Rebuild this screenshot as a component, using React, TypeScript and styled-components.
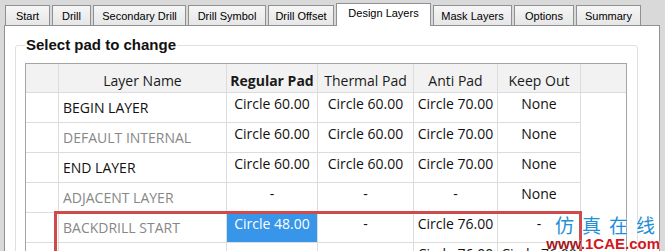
import React from 'react'
import styled, { createGlobalStyle } from 'styled-components'

type Row = {
  name: string;
  muted: boolean;
  pads: string[];
  selected?: number;
}

const tabs = [
  { label: 'Start', width: 45 },
  { label: 'Drill', width: 39 },
  { label: 'Secondary Drill', width: 93 },
  { label: 'Drill Symbol', width: 78 },
  { label: 'Drill Offset', width: 66 },
  { label: 'Design Layers', width: 95 },
  { label: 'Mask Layers', width: 79 },
  { label: 'Options', width: 60 },
  { label: 'Summary', width: 65 },
]

const columns = ['Regular Pad', 'Thermal Pad', 'Anti Pad', 'Keep Out']

const rows: Row[] = [
  { name: 'BEGIN LAYER', muted: false, pads: ['Circle 60.00', 'Circle 60.00', 'Circle 70.00', 'None'] },
  { name: 'DEFAULT INTERNAL', muted: true, pads: ['Circle 60.00', 'Circle 60.00', 'Circle 70.00', 'None'] },
  { name: 'END LAYER', muted: false, pads: ['Circle 60.00', 'Circle 60.00', 'Circle 70.00', 'None'] },
  { name: 'ADJACENT LAYER', muted: true, pads: ['-', '-', '-', 'None'] },
  { name: 'BACKDRILL START', muted: true, pads: ['Circle 48.00', '-', 'Circle 76.00', '-'], selected: 0 },
  { name: 'BACKDRILL MUST NOT CUT', muted: true, pads: ['-', '-', 'Circle 76.00', 'Circle 76.00'] },
]

const App = () => {
  return (
    <Window>
      <GlobalStyle />
      <TabBar>
        {tabs.map((t) => (
          <Tab key={t.label} $width={t.width} $active={t.label === 'Design Layers'}>
            {t.label}
          </Tab>
        ))}
      </TabBar>
      <Panel>
        <GroupBox>
          <GroupTitle>Select pad to change</GroupTitle>
          <GridWrap>
            <Grid>
              <HeadCell />
              <HeadCell>Layer Name</HeadCell>
              {columns.map((c) => (
                <HeadCell key={c} $bold={c === 'Regular Pad'}>{c}</HeadCell>
              ))}
              <HeadCell $last />
              {rows.map((r) => (
                <React.Fragment key={r.name}>
                  <RowHead />
                  <NameCell $muted={r.muted}>{r.name}</NameCell>
                  {r.pads.map((p, i) => (
                    <PadCell key={i} $selected={r.selected === i}>{p}</PadCell>
                  ))}
                  <FillCell />
                </React.Fragment>
              ))}
            </Grid>
            <Highlight />
          </GridWrap>
        </GroupBox>
      </Panel>
      <Stamp>
        <StampCn>仿真在线</StampCn>
        <StampUrl><span>www.</span>1CAE.com</StampUrl>
      </Stamp>
    </Window>
  )
}

const GlobalStyle = createGlobalStyle`
  html, body {
    margin: 0;
    padding: 0;
  }
  body {
    background: #d9d9d9;
    font-family: "Open Sans", "Noto Sans", sans-serif;
  }
`

const Window = styled.div`
  position: relative;
  width: 665px;
  height: 251px;
  box-sizing: border-box;
  padding: 3px 5px 0 4px;
  background: #d9d9d9;
  display: flex;
  flex-direction: column;
  overflow: hidden;
`

const TabBar = styled.div`
  position: relative;
  z-index: 2;
  display: flex;
  align-items: flex-end;
  gap: 2px;
  height: 23px;
  padding-left: 1px;
  margin-bottom: -1px;
`

const Tab = styled.div<{ $active?: boolean; $width: number }>`
  box-sizing: border-box;
  width: ${(p) => p.$width}px;
  height: ${(p) => (p.$active ? '23px' : '20px')};
  margin-bottom: ${(p) => (p.$active ? '0' : '1px')};
  padding-top: ${(p) => (p.$active ? '3px' : '4px')};
  border: 1px solid #8f9091;
  border-bottom: none;
  background: ${(p) => (p.$active ? '#ffffff' : 'linear-gradient(#f6f6f6, #e6e6e6)')};
  font-family: "Liberation Sans", Arial, sans-serif;
  font-size: 11px;
  line-height: 13px;
  text-align: center;
  color: #000;
  white-space: nowrap;
`

const Panel = styled.div`
  position: relative;
  z-index: 1;
  flex: 1;
  background: #ffffff;
  border: 1px solid #8f9091;
  border-bottom: none;
  padding: 10px 21px 0 10px;
`

const GroupBox = styled.fieldset`
  margin: 0;
  padding: 9px 10px 0 9px;
  border: 1px solid #dde1e4;
  border-radius: 3px;
  height: 300px;
`

const GroupTitle = styled.legend`
  padding: 0 1px;
  font-family: "Liberation Sans", Arial, sans-serif;
  font-weight: 700;
  font-size: 15px;
  line-height: 18px;
  color: #111;
`

const GridWrap = styled.div`
  position: relative;
`

const Grid = styled.div`
  display: grid;
  grid-template-columns: 33px 168px 91px 96px 84px 83px 1fr;
  grid-template-rows: 29px;
  grid-auto-rows: 30px;
  width: 602px;
  box-sizing: border-box;
  border: 1px solid #a5a5a5;
  font-size: 14px;
  line-height: 19px;
`

const Cell = styled.div`
  box-sizing: border-box;
  border-right: 1px solid #dcdcdc;
  border-bottom: 1px solid #dcdcdc;
  white-space: nowrap;
  overflow: hidden;
`

const HeadCell = styled(Cell)<{ $bold?: boolean; $last?: boolean }>`
  background: #f2f2f2;
  padding-top: 7px;
  text-align: center;
  color: #1a1a1a;
  font-weight: ${(p) => (p.$bold ? 700 : 400)};
  border-right: ${(p) => (p.$last ? 'none' : '1px solid #dcdcdc')};
`

const RowHead = styled(Cell)`
  background: #ffffff;
`

const NameCell = styled(Cell)<{ $muted: boolean }>`
  display: flex;
  align-items: center;
  padding-left: 4px;
  color: ${(p) => (p.$muted ? '#878787' : '#111111')};
`

const PadCell = styled(Cell)<{ $selected: boolean }>`
  padding-top: 1px;
  text-align: center;
  color: ${(p) => (p.$selected ? '#ffffff' : '#111111')};
  background: ${(p) => (p.$selected ? '#3795ea' : 'transparent')};
`

const FillCell = styled(Cell)`
  border-right: none;
  border-bottom: none;
`

const Highlight = styled.div`
  position: absolute;
  left: 29px;
  top: 148px;
  width: 528px;
  height: 120px;
  box-sizing: border-box;
  border: 3px solid #cf4a4a;
  pointer-events: none;
`

const Stamp = styled.div`
  position: absolute;
  right: 5px;
  bottom: 0;
  z-index: 3;
  display: flex;
  flex-direction: column;
  align-items: flex-end;
`

const StampCn = styled.div`
  font-family: "Noto Sans CJK SC", sans-serif;
  font-size: 19px;
  line-height: 22px;
  letter-spacing: 8px;
  margin-right: -3px;
  color: #1f8fd8;
  text-shadow: 0 0 2px #fff, 0 0 2px #fff;
`

const StampUrl = styled.div`
  font-family: "Liberation Sans", Arial, sans-serif;
  font-weight: 700;
  font-size: 15px;
  line-height: 15px;
  color: #d3161d;
  text-shadow: 0 0 2px #fff, 0 0 1px #fff;

  span {
    color: #a3161a;
  }
`

export default App
